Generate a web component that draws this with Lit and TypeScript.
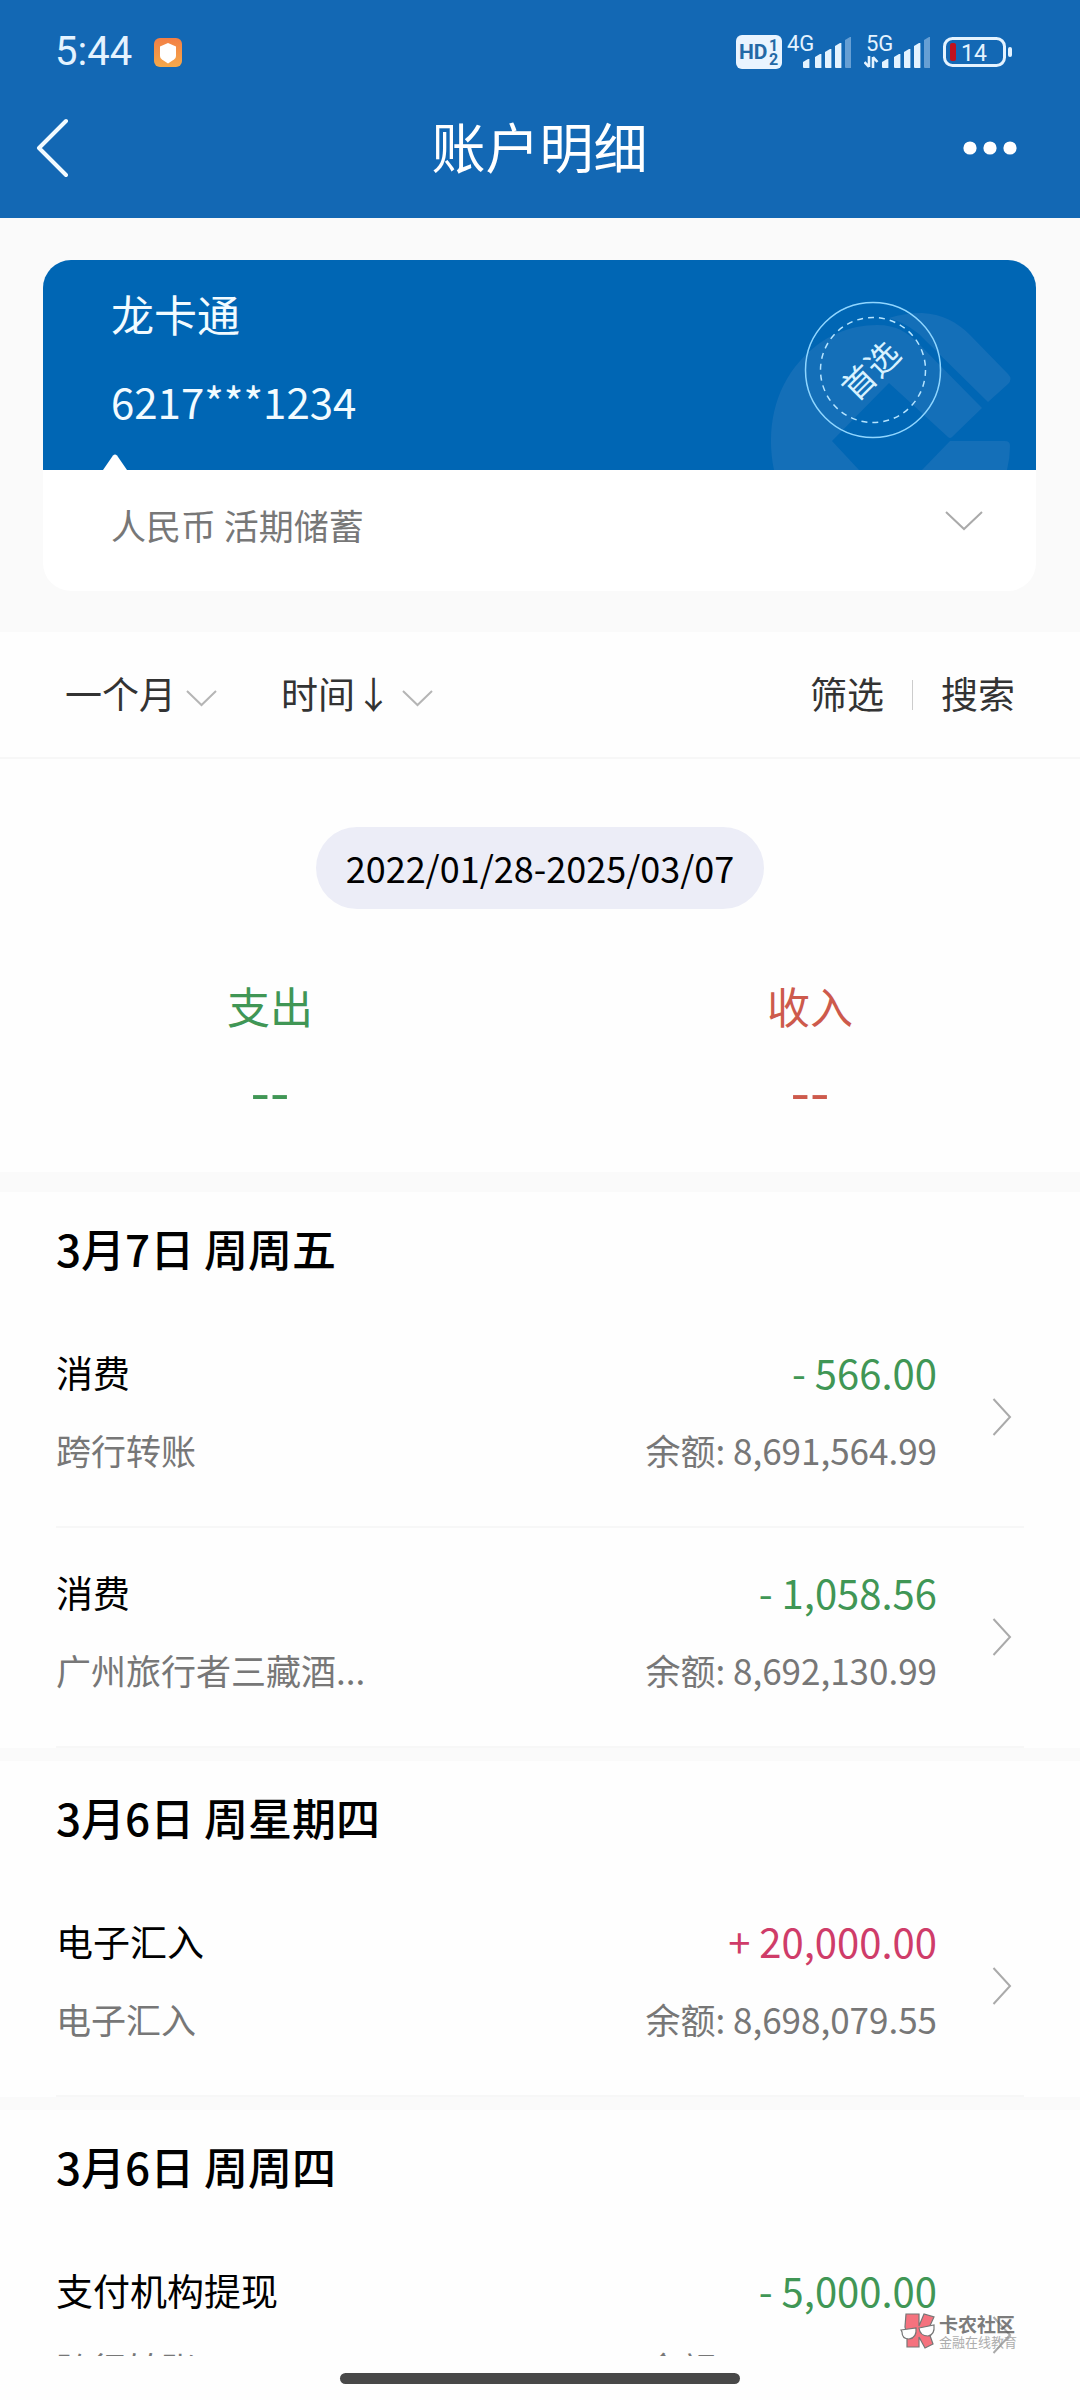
import { LitElement, html, css, svg } from "lit";
import { customElement, property } from "lit/decorators.js";

interface Entry {
  title: string;
  note: string;
  amount: string;
  balance: string;
  kind: "out" | "in";
}

interface DayGroup {
  date: string;
  entries: Entry[];
}

const GROUPS: DayGroup[] = [
  {
    date: "3月7日 周周五",
    entries: [
      { title: "消费", note: "跨行转账", amount: "- 566.00", balance: "8,691,564.99", kind: "out" },
      { title: "消费", note: "广州旅行者三藏酒...", amount: "- 1,058.56", balance: "8,692,130.99", kind: "out" },
    ],
  },
  {
    date: "3月6日 周星期四",
    entries: [
      { title: "电子汇入", note: "电子汇入", amount: "+ 20,000.00", balance: "8,698,079.55", kind: "in" },
    ],
  },
  {
    date: "3月6日 周周四",
    entries: [
      { title: "支付机构提现", note: "跨行转账", amount: "- 5,000.00", balance: "8,678,079.55", kind: "out" },
    ],
  },
];

const bars = (x: number[]) => svg`
  <path fill="#e4f3ff" d="M${x[0]} 27l5-3h1.400v9h-5.400q-1 0-1-1z"/>
  <path fill="#e4f3ff" d="M${x[1]} 22l5-3h1.400v14h-5.400q-1 0-1-1z"/>
  <path fill="#e4f3ff" d="M${x[2]} 17l5-3h1.400v19h-5.400q-1 0-1-1z"/>
  <path fill="#e4f3ff" d="M${x[3]} 11l5-3h1.400v25h-5.400q-1 0-1-1z"/>
  <path fill="#669fd4" d="M${x[4]} 5l5-3h1.400v31h-5.400q-1 0-1-1z"/>`;

@customElement("status-bar")
export class StatusBar extends LitElement {
  static styles = css`
    :host {
      display: flex;
      align-items: center;
      justify-content: space-between;
      height: 52px;
      padding: 26px 68px 0 55px;
      color: #e4f3ff;
      font-family: Roboto, "Noto Sans CJK SC", sans-serif;
    }
    .left,
    .right {
      display: flex;
      align-items: center;
    }
    .left {
      gap: 22px;
    }
    .time {
      font-size: 40px;
      line-height: 52px;
    }
    .hd {
      margin-right: 5px;
    }
    .sim {
      margin-right: 13px;
    }
    svg {
      display: block;
    }
  `;

  render() {
    return html`
      <div class="left">
        <span class="time">5:44</span>
        <svg width="28" height="29" viewBox="0 0 28 29" aria-hidden="true">
          <defs>
            <linearGradient id="g" x1="0" y1="0" x2="0" y2="1">
              <stop offset="0" stop-color="#f37f45" />
              <stop offset="1" stop-color="#f5a94a" />
            </linearGradient>
          </defs>
          <rect width="28" height="29" rx="6" fill="url(#g)" />
          <path d="M14 5l8 3.500v9.500q0 2-2 3.500l-6 4-6-4q-2-1.500-2-3.500V8.500z" fill="#fff" />
        </svg>
      </div>
      <div class="right">
        <svg class="hd" width="46" height="34" viewBox="0 0 46 34" aria-hidden="true">
          <rect width="46" height="34" rx="6" fill="#e9f4ff" />
          <g fill="#2469a6" font-family="Roboto, sans-serif" font-weight="700">
            <text x="3" y="24" font-size="21">HD</text>
            <text x="33" y="16" font-size="16">1</text>
            <text x="33" y="30" font-size="16">2</text>
          </g>
        </svg>
        <svg class="sim" width="64" height="46" viewBox="0 -6 64 46" aria-hidden="true">
          <text x="0" y="16" font-size="22" fill="#e4f3ff" font-family="Roboto, sans-serif">4G</text>
          ${bars([16, 28, 38, 48, 58])}
        </svg>
        <svg class="sim" width="66" height="46" viewBox="0 -6 66 46" aria-hidden="true">
          <text x="2" y="16" font-size="22" fill="#e4f3ff" font-family="Roboto, sans-serif">5G</text>
          <path d="M5 21v11M5 32l-4.500-5M9 33V22M9 22l4.500 5" stroke="#e4f3ff" stroke-width="2.600" fill="none" />
          ${bars([18, 30, 40, 50, 60])}
        </svg>
        <svg width="69" height="34" viewBox="0 0 69 34" aria-hidden="true">
          <rect x="1.500" y="3.500" width="60" height="27" rx="8" fill="none" stroke="#e4f3ff" stroke-width="3" />
          <rect x="7" y="8" width="6" height="18" rx="2" fill="#c1121c" />
          <text x="18" y="26" font-size="23" fill="#e4f3ff" font-family="Roboto, sans-serif">14</text>
          <rect x="65" y="12" width="4" height="10" rx="2" fill="#e4f3ff" />
        </svg>
      </div>
    `;
  }
}

@customElement("account-card")
export class AccountCard extends LitElement {
  static styles = css`
    :host {
      display: block;
      margin: 42px 44px 41px 43px;
      border-radius: 28px;
      overflow: hidden;
      background: #fff;
    }
    .face {
      position: relative;
      box-sizing: border-box;
      height: 210px;
      padding: 25px 68px 0;
      background: #0066b4;
      color: #f2fbff;
    }
    .mark {
      position: absolute;
      right: 0;
      top: 0;
    }
    .name {
      position: relative;
      margin: 0;
      font-size: 43px;
      line-height: 56px;
      font-weight: 400;
    }
    .number {
      position: relative;
      margin: 32px 0 0;
      font-size: 42px;
      line-height: 56px;
    }
    .notch {
      position: absolute;
      left: 60px;
      bottom: 0;
    }
    .kind {
      display: flex;
      align-items: center;
      justify-content: space-between;
      box-sizing: border-box;
      width: 100%;
      height: 121px;
      margin: 0;
      padding: 0 53px 12px 68px;
      border: 0;
      background: none;
      color: #777;
      font: inherit;
      font-size: 35px;
      line-height: 48px;
      text-align: left;
    }
    .kind svg {
      margin-bottom: 8px;
    }
    svg {
      display: block;
    }
  `;

  render() {
    return html`
      <div class="face">
        <svg class="mark" width="286" height="210" viewBox="750 260 286 210" aria-hidden="true">
          <g fill="#146fb8">
            <path d="M774 470C766 430 774 390 800 361C822 336 850 325 877 325C897 325 908 333 918 343L982 408L952 437Q950 439 948 437L889 383L832 441L859 470Z" />
            <path d="M889 318Q905 313 922 313C942 314 957 322 970 335L1008 374Q1013 379 1008 384L988 402L926 341Q912 325 889 318Z" />
            <path d="M950 441H1005Q1010 441 1010 446Q1010 458 1007 470H922Z" />
          </g>
          <circle cx="873" cy="370" r="67.500" fill="none" stroke="#8fd6ff" stroke-width="1.500" />
          <circle cx="873" cy="370" r="52.500" fill="none" stroke="#b5e4ff" stroke-width="1.500" stroke-dasharray="6 5" />
          <text
            transform="rotate(-45 873 370)"
            x="871"
            y="381"
            text-anchor="middle"
            font-size="33"
            fill="#d8f2ff"
          >首选</text>
        </svg>
        <h2 class="name">龙卡通</h2>
        <p class="number">6217***1234</p>
        <svg class="notch" width="24" height="16" viewBox="0 0 24 16" aria-hidden="true">
          <path d="M0 16L10 1.500Q12 -0.500 14 1.500L24 16z" fill="#fff" />
        </svg>
      </div>
      <button class="kind" type="button">
        <span>人民币 活期储蓄</span>
        <svg width="38" height="20" viewBox="0 0 38 20" aria-hidden="true">
          <path d="M1 1L19 18L37 1" fill="none" stroke="#aaa" stroke-width="2" />
        </svg>
      </button>
    `;
  }
}

@customElement("entry-row")
export class EntryRow extends LitElement {
  @property({ attribute: false }) entry!: Entry;

  static styles = css`
    :host {
      display: block;
    }
    .row {
      display: flex;
      align-items: center;
      height: 218px;
      border-bottom: 2px solid #f7f7f7;
      color: inherit;
      text-decoration: none;
    }
    .text {
      flex: 1;
      min-width: 0;
      display: grid;
      grid-template-columns: 1fr auto;
      row-gap: 28px;
      padding-bottom: 14px;
    }
    .title {
      color: #000;
      font-size: 37px;
      line-height: 52px;
    }
    .amount {
      font-size: 40px;
      line-height: 52px;
      text-align: right;
    }
    .out {
      color: #409655;
    }
    .in {
      color: #cf3c69;
    }
    .minor {
      color: #777;
      font-size: 35px;
      line-height: 48px;
      white-space: nowrap;
    }
    .balance {
      text-align: right;
    }
    svg {
      display: block;
      margin: 0 12px 0 55px;
    }
  `;

  render() {
    const e = this.entry;
    return html`
      <a class="row" href="#">
        <span class="text">
          <span class="title">${e.title}</span>
          <span class="amount ${e.kind}">${e.amount}</span>
          <span class="minor">${e.note}</span>
          <span class="minor balance">余额: ${e.balance}</span>
        </span>
        <svg width="20" height="38" viewBox="0 0 20 38" aria-hidden="true">
          <path d="M1.500 1L18 19L1.500 37" fill="none" stroke="#aaa" stroke-width="2" />
        </svg>
      </a>
    `;
  }
}

@customElement("app-root")
export class AppRoot extends LitElement {
  static styles = css`
    :host {
      position: relative;
      display: flex;
      flex-direction: column;
      height: 100vh;
      overflow: hidden;
      background: #fafafa;
      font-family: "Noto Sans CJK SC", sans-serif;
    }
    .top {
      flex: none;
      background: #1368b4;
    }
    .nav {
      display: flex;
      align-items: center;
      justify-content: space-between;
      height: 140px;
      padding: 0 63px 0 36px;
    }
    .nav h1 {
      margin: 0;
      padding-bottom: 4px;
      color: #fff;
      font-size: 54px;
      line-height: 72px;
      font-weight: 400;
    }
    .side {
      display: flex;
      width: 80px;
      padding: 0;
      border: 0;
      background: none;
    }
    .side.more {
      width: 54px;
      justify-content: flex-end;
    }
    .filters {
      flex: none;
      display: flex;
      align-items: center;
      height: 125px;
      padding: 0 65px;
      border-bottom: 2px solid #f7f7f7;
      background: #fefefe;
    }
    .filter {
      display: flex;
      align-items: center;
      gap: 10px;
      padding: 0 0 4px;
      border: 0;
      background: none;
      color: #333;
      font: inherit;
      font-size: 37px;
      line-height: 52px;
    }
    .filter svg {
      margin-top: 12px;
    }
    .period {
      margin-right: 64px;
    }
    .grow {
      flex: 1;
    }
    .rule {
      width: 1px;
      height: 30px;
      margin: 0 28px;
      background: #ccc;
    }
    .summary {
      flex: none;
      display: flex;
      flex-direction: column;
      align-items: center;
      height: 345px;
      padding-top: 68px;
      background: #fefefe;
    }
    .range {
      padding: 0 30px 2px;
      border-radius: 41px;
      background: #ecedf7;
      color: #000;
      font-size: 36px;
      line-height: 80px;
    }
    .totals {
      display: grid;
      grid-template-columns: 1fr 1fr;
      width: 100%;
      margin: 66px 0 0;
      text-align: center;
    }
    .totals dt {
      font-size: 43px;
      line-height: 60px;
    }
    .totals dd {
      margin: 26px 0 0;
      font-size: 56px;
      line-height: 56px;
    }
    .out {
      color: #409655;
    }
    .in {
      color: #cd5a4c;
    }
    .list {
      flex: 1;
      min-height: 0;
      overflow: hidden;
      display: flex;
      flex-direction: column;
      gap: 13px;
      padding-top: 20px;
    }
    .group {
      flex: none;
      padding: 0 56px;
      background: #fefefe;
    }
    .group h2 {
      margin: 0;
      padding-bottom: 4px;
      color: #000;
      font-size: 44px;
      line-height: 112px;
      font-weight: 500;
    }
    .home {
      flex: none;
      display: flex;
      justify-content: center;
      height: 27px;
      padding-top: 17px;
      background: #fefefe;
    }
    .home span {
      width: 37%;
      height: 11px;
      border-radius: 6px;
      background: #484848;
    }
    .stamp {
      position: absolute;
      right: 63px;
      bottom: 51px;
      display: flex;
      align-items: center;
      gap: 3px;
      opacity: 0.8;
    }
    .stamp p {
      margin: 0;
      color: #999;
      font-size: 13px;
      line-height: 14px;
    }
    .stamp .brand {
      color: #5c5c5c;
      font-size: 19px;
      line-height: 22px;
      font-weight: 700;
    }
    svg {
      display: block;
    }
  `;

  private chevron() {
    return html`<svg width="31" height="17" viewBox="0 0 31 17" aria-hidden="true">
      <path d="M1 1L15.500 15L30 1" fill="none" stroke="#b5b5b5" stroke-width="2" />
    </svg>`;
  }

  render() {
    return html`
      <header class="top">
        <status-bar></status-bar>
        <nav class="nav">
          <button class="side" type="button" aria-label="返回">
            <svg width="32" height="60" viewBox="0 0 32 60" aria-hidden="true">
              <path d="M30 3L3 30L30 57" fill="none" stroke="#f2fbff" stroke-width="4" stroke-linecap="round" stroke-linejoin="round" />
            </svg>
          </button>
          <h1>账户明细</h1>
          <button class="side more" type="button" aria-label="更多">
            <svg width="54" height="14" viewBox="0 0 54 14" aria-hidden="true">
              <g fill="#fff">
                <circle cx="7" cy="7" r="6.600" />
                <circle cx="27" cy="7" r="6.600" />
                <circle cx="47" cy="7" r="6.600" />
              </g>
            </svg>
          </button>
        </nav>
      </header>
      <account-card></account-card>
      <div class="filters">
        <button class="filter period" type="button">一个月 ${this.chevron()}</button>
        <button class="filter" type="button">时间↓ ${this.chevron()}</button>
        <span class="grow"></span>
        <button class="filter" type="button">筛选</button>
        <span class="rule"></span>
        <button class="filter" type="button">搜索</button>
      </div>
      <section class="summary">
        <span class="range">2022/01/28-2025/03/07</span>
        <dl class="totals">
          <div class="out"><dt>支出</dt><dd>--</dd></div>
          <div class="in"><dt>收入</dt><dd>--</dd></div>
        </dl>
      </section>
      <main class="list">
        ${GROUPS.map(
          (g) => html`
            <section class="group">
              <h2>${g.date}</h2>
              ${g.entries.map((e) => html`<entry-row .entry=${e}></entry-row>`)}
            </section>
          `,
        )}
      </main>
      <footer class="home"><span></span></footer>
      <div class="stamp">
        <svg width="36" height="36" viewBox="0 0 36 36" aria-hidden="true">
          <path d="M6 1H19V13L24 1L34 4L28 17L33 31L25 35L19 24V34H7V22L5 14Z" fill="#f4505f" stroke="#555" stroke-width="1.200" />
          <path d="M1 17L16 15Q17 25 9 26Q2 26 2 19ZM19 15L34 12Q35 22 28 23Q20 23 19 15Z" fill="#fff" stroke="#555" stroke-width="1.200" />
        </svg>
        <div>
          <p class="brand">卡农社区</p>
          <p>金融在线教育</p>
        </div>
      </div>
    `;
  }
}
